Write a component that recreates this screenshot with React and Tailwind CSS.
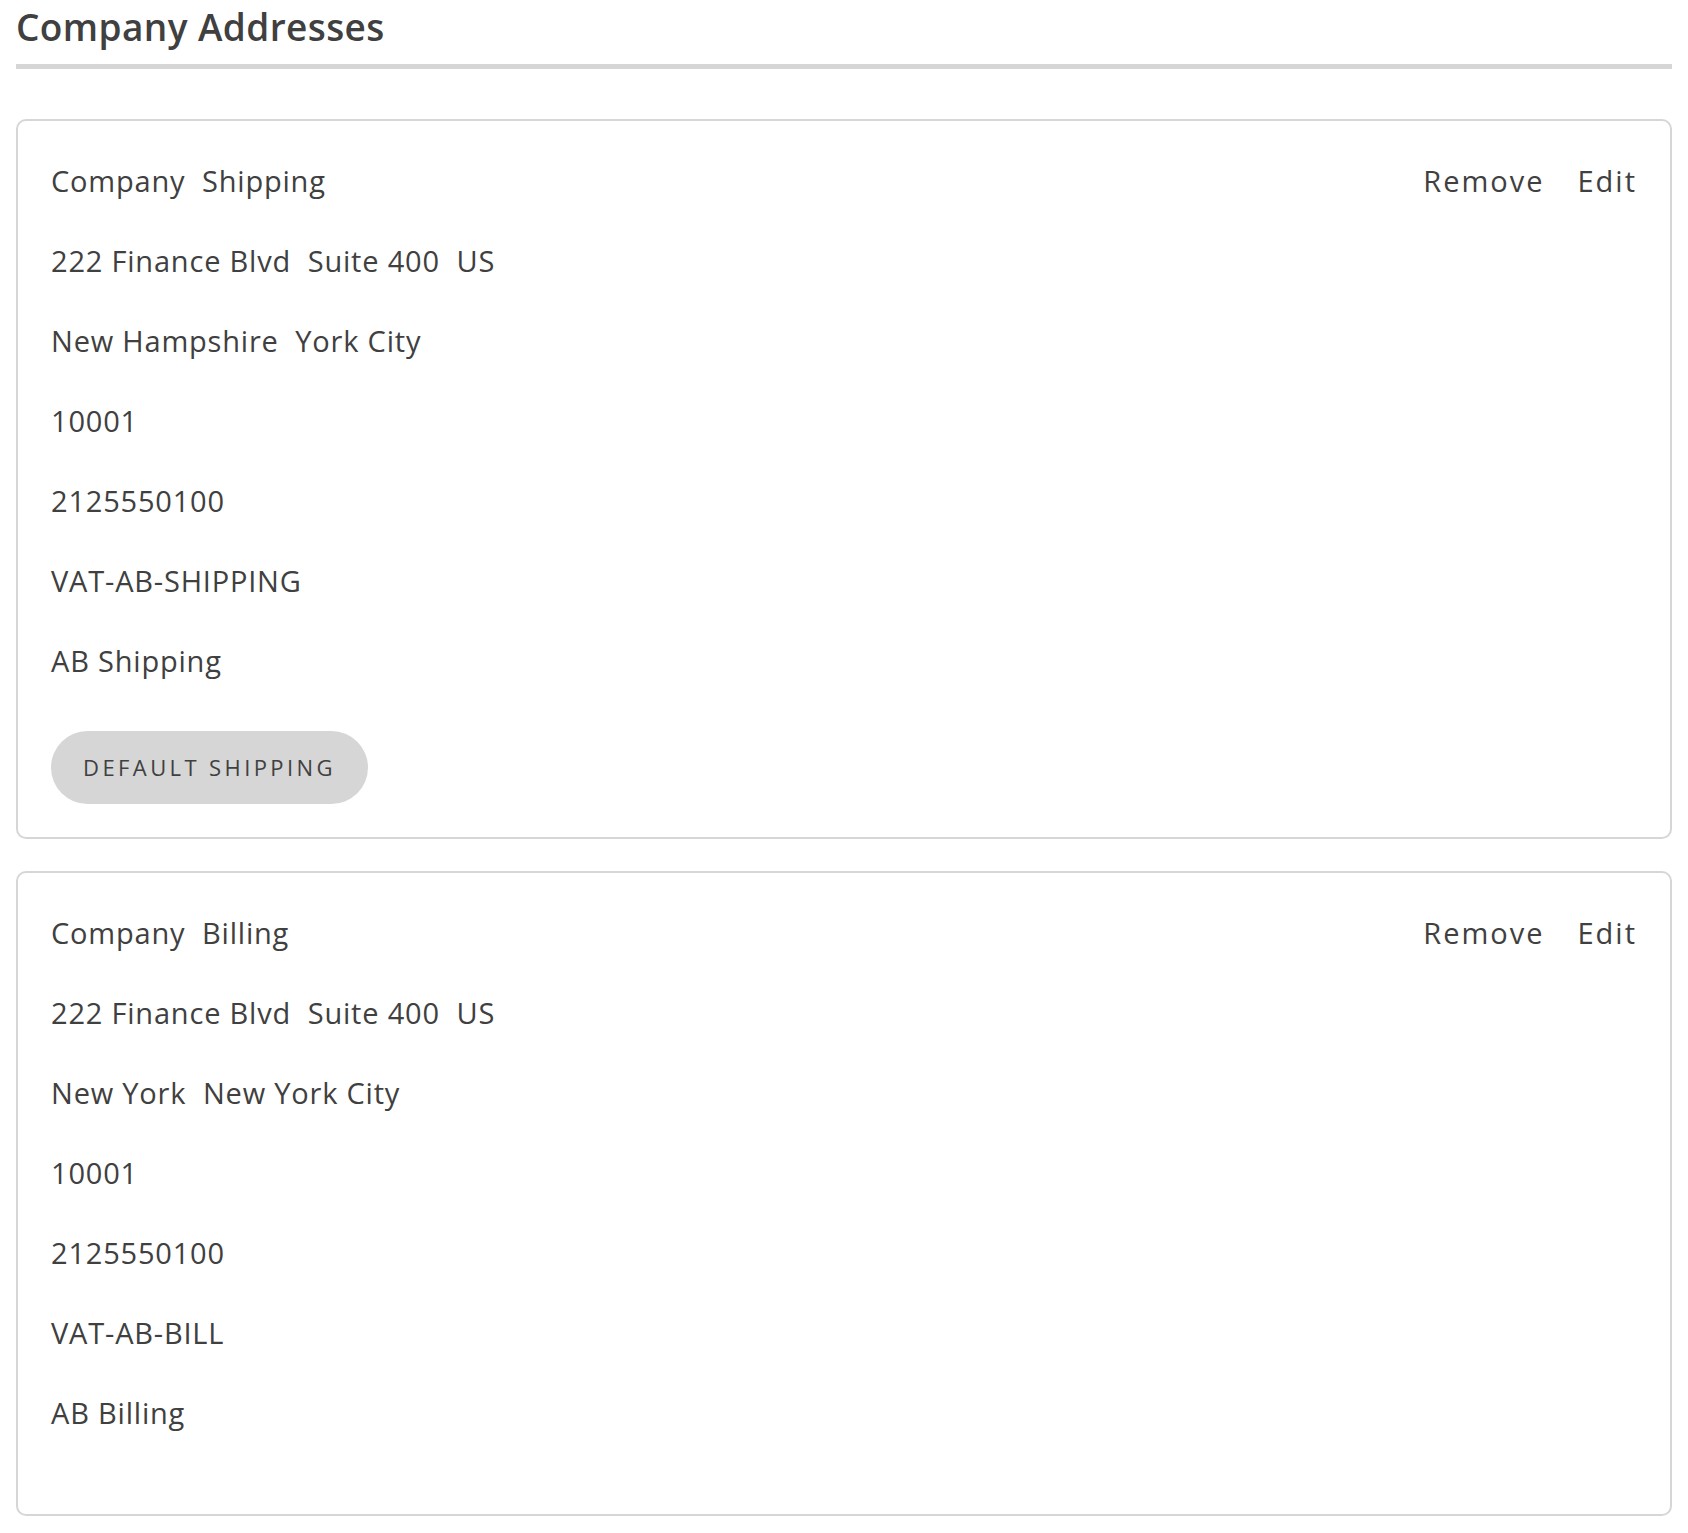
export default function App() {
  const cards = [
    {
      title: "Company  Shipping",
      lines: [
        "222 Finance Blvd  Suite 400  US",
        "New Hampshire  York City",
        "10001",
        "2125550100",
        "VAT-AB-SHIPPING",
        "AB Shipping",
      ],
      badge: "DEFAULT SHIPPING",
    },
    {
      title: "Company  Billing",
      lines: [
        "222 Finance Blvd  Suite 400  US",
        "New York  New York City",
        "10001",
        "2125550100",
        "VAT-AB-BILL",
        "AB Billing",
      ],
      badge: null,
    },
  ];
  return (
    <div
      className="bg-white px-4 pt-[1px] pb-4 text-[#404040]"
      style={{ fontFamily: '"Open Sans", "Noto Sans", sans-serif' }}
    >
      <h1 className="text-[37px] font-semibold leading-[52px] tracking-[0.4px]">
        Company Addresses
      </h1>
      <div className="mt-[11px] h-[5px] bg-[#d6d6d6]" />
      <div className="mt-[50px] flex flex-col gap-[32px]">
        {cards.map((c, i) => (
          <div
            key={i}
            className={`rounded-[10px] border-2 border-[#d6d6d6] bg-white pl-[33px] pr-[33px] pt-[20px] ${
              c.badge ? "pb-[33px]" : "pb-[61px]"
            }`}
          >
            <div className="flex h-[80px] items-center justify-between text-[29px] tracking-[0.8px]">
              <span className="whitespace-pre">{c.title}</span>
              <div className="flex gap-[33px] tracking-[2px]">
                <span>Remove</span>
                <span>Edit</span>
              </div>
            </div>
            {c.lines.map((l, j) => (
              <div
                key={j}
                className="flex h-[80px] items-center whitespace-pre text-[29px] tracking-[0.8px]"
              >
                {l}
              </div>
            ))}
            {c.badge && (
              <div className="mt-[30px] inline-flex h-[73px] w-[317px] items-center justify-center rounded-full bg-[#d6d6d6] text-[22px] tracking-[3.4px]">
                {c.badge}
              </div>
            )}
          </div>
        ))}
      </div>
    </div>
  );
}
